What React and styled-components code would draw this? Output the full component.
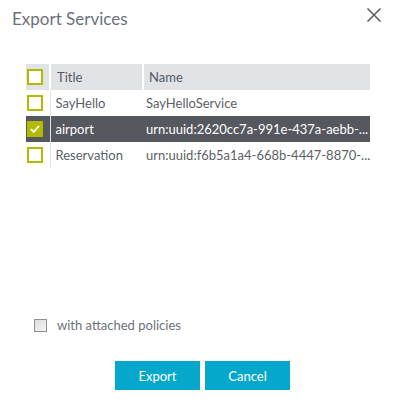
import React, { useState } from 'react'
import styled, { createGlobalStyle } from 'styled-components'

const Global = createGlobalStyle`
body {
  margin: 0;
  background: #fff;
  font-family: Lato, "Open Sans", sans-serif;
}
`

const Dialog = styled.div`
width: 394px;
height: 405px;
display: flex;
flex-direction: column;
box-sizing: border-box;
`

const Header = styled.div`
display: flex;
justify-content: space-between;
align-items: flex-start;
padding: 7px 12px 0 12px;
height: 57px;
box-sizing: border-box;
`

const Title = styled.h1`
margin: 0;
font-size: 17px;
font-weight: 400;
color: #6b717b;
line-height: 24px;
`

const Close = styled.button`
border: 0;
background: none;
padding: 0;
width: 16px;
height: 16px;
cursor: pointer;
display: flex;
`

const TableWrap = styled.div`
margin: 7px 24px 0 26px;
`

const Table = styled.table`
width: 344px;
border-collapse: collapse;
table-layout: fixed;
font-size: 13px;
`

const Th = styled.th`
background: #e1e3e7;
height: 26px;
padding: 0 0 0 ${p => p.$pad || 0}px;
text-align: left;
font-weight: 400;
color: #555a63;
border-left: ${p => (p.$first ? 'none' : '2px solid #fff')};
white-space: nowrap;
`

const Row = styled.tr`
background: ${p => (p.$selected ? '#55585f' : '#fff')};
color: ${p => (p.$selected ? '#fff' : '#5b5f66')};
`

const Td = styled.td`
height: 26px;
padding: 0 0 0 ${p => p.$pad || 0}px;
white-space: nowrap;
border-left: ${p => (p.$line ? '1px solid #e4e5e8' : 'none')};
`

const Box = styled.span`
display: block;
width: 16px;
height: 16px;
box-sizing: border-box;
border: 2px solid #b3bb00;
background: ${p => (p.$checked ? '#b3bb00' : '#fff')};
margin-left: 1px;
position: relative;
`

const Spacer = styled.div`
flex: 1;
`

const Policies = styled.label`
display: flex;
align-items: center;
gap: 10px;
padding-left: 34px;
font-size: 13px;
color: #6b717b;
margin-bottom: 28px;
`

const NativeBox = styled.span`
width: 11px;
height: 11px;
border: 1px solid #8e8f8f;
background: linear-gradient(135deg, #dcdcdc, #f6f6f6);
display: block;
`

const Buttons = styled.div`
display: flex;
gap: 5px;
padding-left: 115px;
margin-bottom: 15px;
`

const Button = styled.button`
width: 85px;
height: 29px;
border: 0;
background: #05a7cb;
color: #fff;
font-family: inherit;
font-size: 13px;
cursor: pointer;
`

const Check = () => (
  <svg width="12" height="12" viewBox="0 0 12 12" style={{ position: 'absolute', left: 0, top: 0 }}>
    <path d="M2 6.2 L4.8 9 L10 2.8" fill="none" stroke="#fff" strokeWidth="1.8" />
  </svg>
)

const services = [
  { title: 'SayHello', name: 'SayHelloService' },
  { title: 'airport', name: 'urn:uuid:2620cc7a-991e-437a-aebb-...', selected: true },
  { title: 'Reservation', name: 'urn:uuid:f6b5a1a4-668b-4447-8870-...' },
]

export default function App() {
  const [rows] = useState(services)
  return (
    <Dialog>
      <Global />
      <Header>
        <Title>Export Services</Title>
        <Close aria-label="close">
          <svg width="16" height="16" viewBox="0 0 16 16">
            <path d="M1.5 1.5 L14.5 14.5 M14.5 1.5 L1.5 14.5" stroke="#5b5f68" strokeWidth="1.6" />
          </svg>
        </Close>
      </Header>
      <TableWrap>
        <Table>
          <colgroup>
            <col style={{ width: 24 }} />
            <col style={{ width: 93 }} />
            <col />
          </colgroup>
          <thead>
            <tr>
              <Th $first><Box /></Th>
              <Th $pad={6}>Title</Th>
              <Th $pad={5}>Name</Th>
            </tr>
          </thead>
          <tbody>
            {rows.map(r => (
              <Row key={r.title} $selected={r.selected}>
                <Td><Box $checked={r.selected}>{r.selected && <Check />}</Box></Td>
                <Td $pad={5} $line>{r.title}</Td>
                <Td $pad={3}>{r.name}</Td>
              </Row>
            ))}
          </tbody>
        </Table>
      </TableWrap>
      <Spacer />
      <Policies>
        <NativeBox />
        with attached policies
      </Policies>
      <Buttons>
        <Button>Export</Button>
        <Button>Cancel</Button>
      </Buttons>
    </Dialog>
  )
}
